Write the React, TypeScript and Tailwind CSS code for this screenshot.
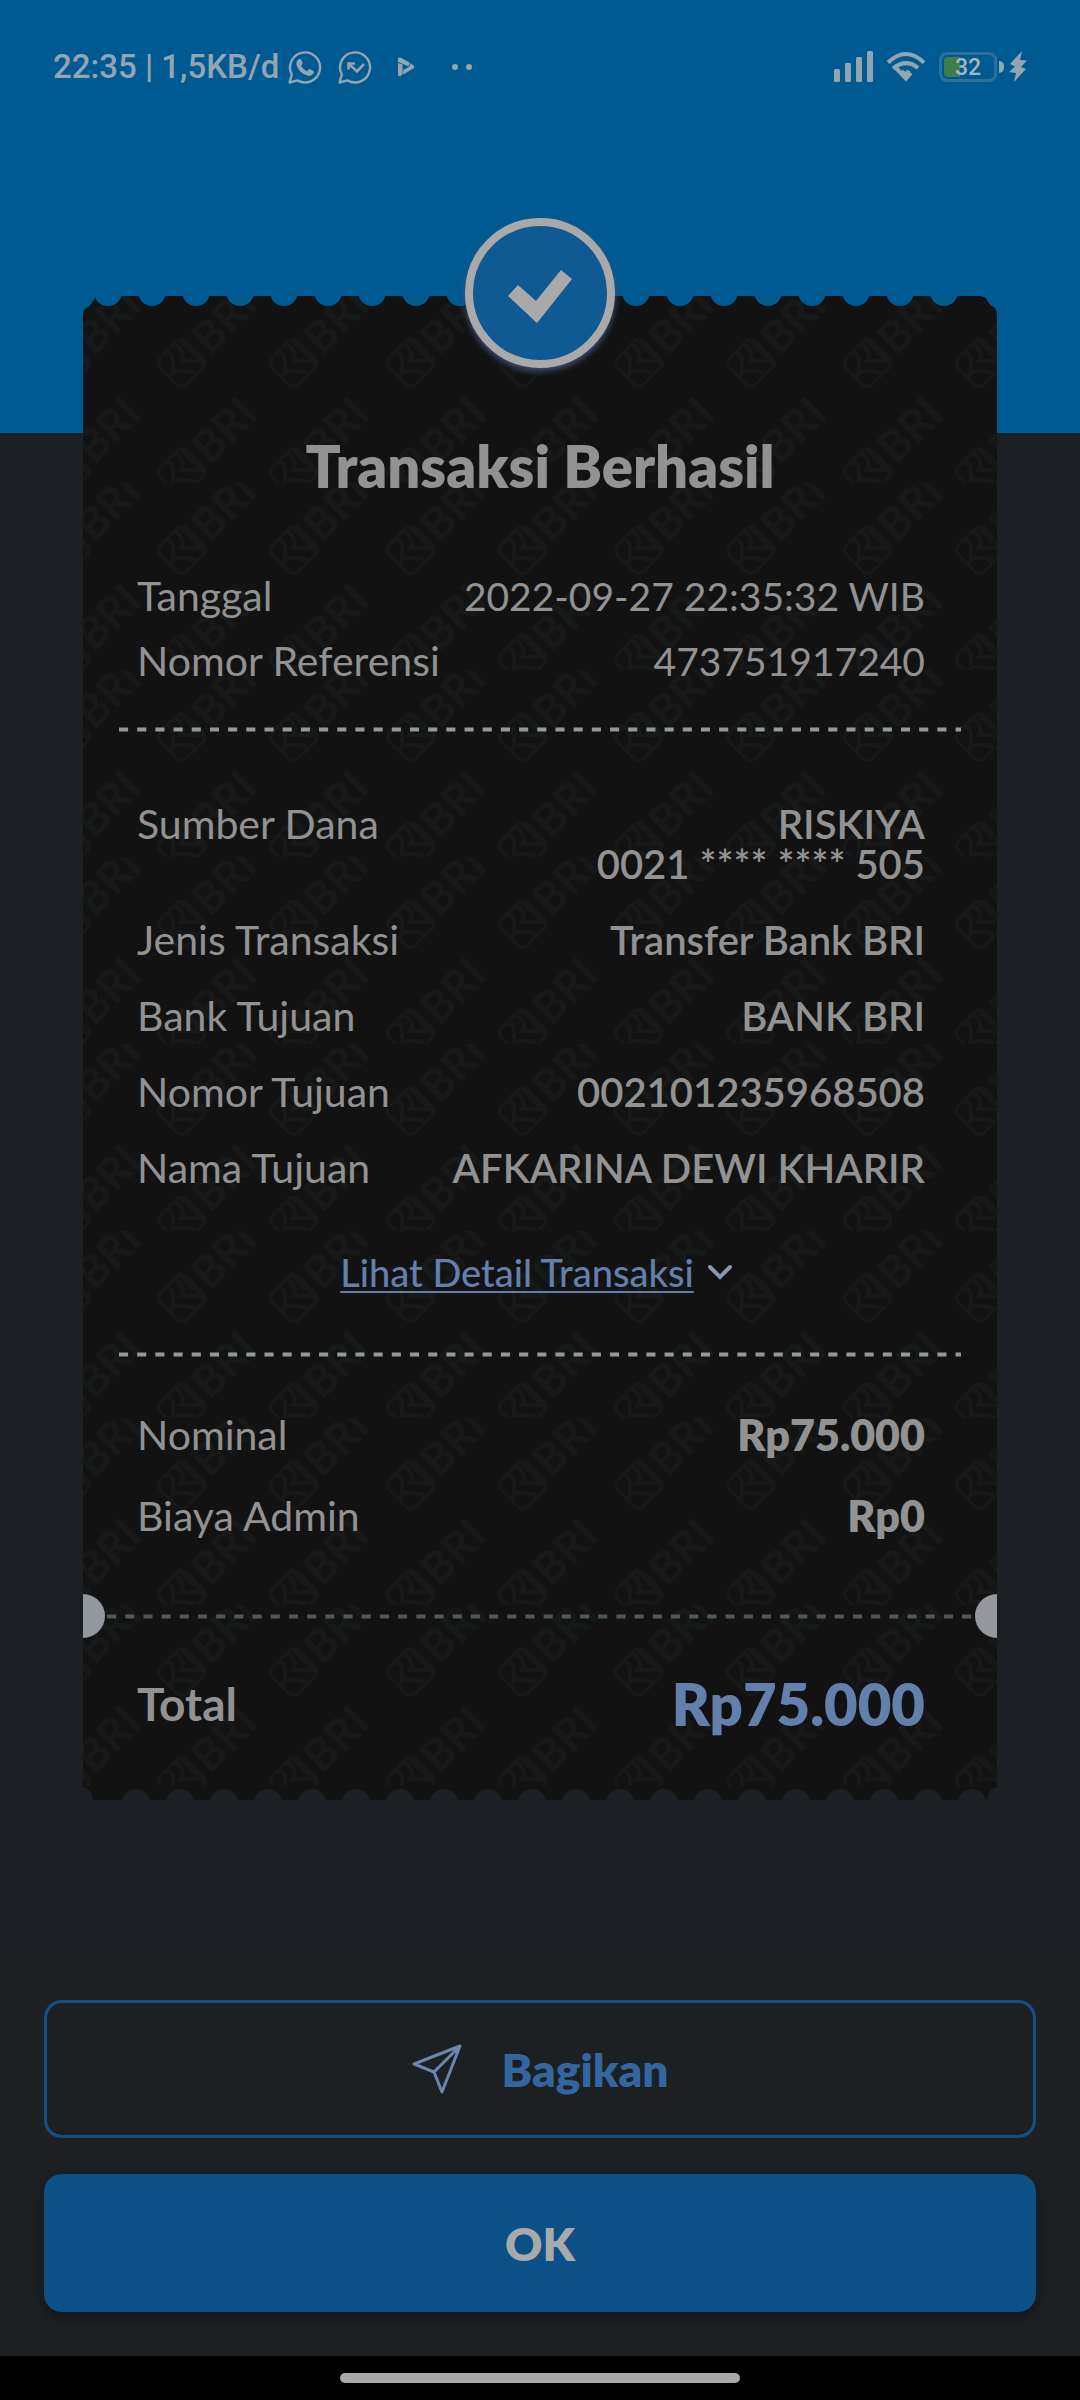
import React from "react";

const MARK = "#161918";

function BriMark({ x, y }: { x: number; y: number }) {
  return (
    <g transform={`translate(${x} ${y})`} fill="none" stroke={MARK} strokeWidth="4">
      <path d="M-18 -9 Q-9 -12 -8 -3 V6 Q-7 10 -12 14 M-10 -17 Q-2 -20 1 -10 Q3 -6 0 -2 H22 M-8 8 H6 L14 10" />
      <g transform="rotate(-45)">
        <rect x="-18" y="-18" width="37" height="37" rx="7" strokeWidth="3" />
        <path d="M16 -17 V18" />
        <text
          x="25"
          y="16"
          fill={MARK}
          stroke="none"
          fontFamily="Lato, sans-serif"
          fontWeight="700"
          fontSize="44"
        >
          BRI
        </text>
      </g>
    </g>
  );
}

function Watermark() {
  const xs = [-130, -18, 98, 210, 327, 439];
  return (
    <svg className="pointer-events-none absolute inset-x-0 top-0 h-[calc(100%-14px)] w-full" aria-hidden="true">
      <defs>
        <pattern id="bri" width="457" height="187" patternUnits="userSpaceOnUse">
          {xs.map((x) => (
            <g key={x}>
              <BriMark x={x} y={67} />
              <BriMark x={x} y={176} />
            </g>
          ))}
        </pattern>
      </defs>
      <rect width="100%" height="100%" fill="url(#bri)" />
    </svg>
  );
}

const holes = Array.from({ length: 20 }, (_, i) => i * 44);

function TopEdge() {
  return (
    <svg
      className="absolute inset-x-0 top-0 h-5 w-full fill-[#005a92]"
      viewBox="0 0 914 20"
      preserveAspectRatio="none"
      aria-hidden="true"
    >
      {holes.map((x) => (
        <circle key={x} cx={x + 25} cy="-4" r="14" />
      ))}
      <path d="M0 0 H13 Q9 9 3 12 Q0 14 0 20 Z" />
      <path d="M914 0 H897 Q903 1 904 4 Q907 10 911 11 Q914 14 914 20 Z" />
    </svg>
  );
}

function BottomEdge() {
  return (
    <svg
      className="absolute inset-x-0 bottom-0 h-5 w-full fill-[#1c1f24]"
      viewBox="0 0 914 20"
      preserveAspectRatio="none"
      aria-hidden="true"
    >
      {holes.map((x) => (
        <circle key={x} cx={x + 53} cy="23" r="14" />
      ))}
      <path d="M0 7 Q9 9 10 20 H0 Z" />
      <path d="M914 7 Q905 9 904 20 H914 Z" />
    </svg>
  );
}

function Dashes({ className, units }: { className: string; units: number }) {
  return (
    <svg className={className} aria-hidden="true">
      <line x1="0" x2="100%" y1="50%" y2="50%" strokeWidth="4" stroke="currentColor" pathLength={units} strokeDasharray="5 5" />
    </svg>
  );
}

function Row({ label, children, value }: { label: string; children: React.ReactNode; value: string }) {
  return (
    <div className="flex justify-between">
      <dt className="text-[41px] leading-10">{label}</dt>
      <dd className={"text-right " + value}>{children}</dd>
    </div>
  );
}

function Bubble({ children }: { children: React.ReactNode }) {
  return (
    <svg className="h-9 w-9" viewBox="0 0 36 36" fill="none" stroke="currentColor" strokeWidth="2.4" aria-hidden="true">
      <path d="M2.5 33.5 L4.8 25.5 A15 15 0 1 1 10.5 31.4 Z" strokeLinejoin="round" />
      {children}
    </svg>
  );
}

function StatusBar() {
  return (
    <div className="flex h-[134px] items-center justify-between pl-[53px] pr-[53px] text-[#93a5b3]">
      <div className="flex items-center">
        <span className="font-[Roboto,sans-serif] text-[33px] font-medium leading-10">22:35 | 1,5KB/d</span>
        <div className="ml-2 flex items-center gap-[14px]">
          <Bubble>
            <path
              d="M11.6 10.2 q1.5 -1.2 2.4 .4 l1.6 3 q.4 1 -.6 2 l-1 1.2 q2 3.8 6 5.4 l1.6 -1.8 q.8 -.8 1.6 -.2 l3.2 1.8 q1 .8 .2 2.2 q-2.2 3.4 -6 2.4 q-8.4 -2.4 -11 -10.4 q-.8 -4 2 -6 Z"
              fill="currentColor"
              stroke="none"
            />
          </Bubble>
          <Bubble>
            <path d="M18 14.5 H11.5 V20.5 M12 15 L20 22.5 L27 15" strokeWidth="2.6" />
          </Bubble>
        </div>
        <svg className="ml-6 h-5 w-[18px]" viewBox="0 0 18 20" fill="currentColor" aria-hidden="true">
          <path d="M1 6 L5.6 7.5 V17 L3.500 19 Q1 20 1 17.500 Z M1 4.8 V2 Q1.500 0 4 .8 L12.500 5.500 L11.500 9.400 Z M13.200 6 L17 9 Q18 10 17 11 L6.200 17.600 V13 L12.200 10 Z" />
        </svg>
        <svg className="ml-9 h-2 w-6" viewBox="0 0 24 8" fill="currentColor" aria-hidden="true">
          <circle cx="4" cy="4" r="3" />
          <circle cx="18" cy="4" r="3" />
        </svg>
      </div>
      <div className="flex items-center">
        <svg className="h-8 w-10" viewBox="0 0 40 32" fill="currentColor" aria-hidden="true">
          <rect x="0" y="18" width="6" height="13" rx="1.5" />
          <rect x="11" y="12" width="6" height="19" rx="1.5" />
          <rect x="22" y="6" width="6" height="25" rx="1.5" />
          <rect x="33" y="0" width="6" height="31" rx="1.5" />
        </svg>
        <svg className="ml-3 h-8 w-10" viewBox="0 0 40 32" fill="none" stroke="currentColor" strokeWidth="4" aria-hidden="true">
          <path d="M2 11.5 Q20 -5.5 38 11.5" />
          <path d="M7 17.500 Q20 7 32 17" />
          <path d="M9 16 L20 27.500 L25 22 M15.500 20.500 L20.500 24 L22.500 19.500" />
        </svg>
        <div className="ml-[13px] flex h-[30px] w-[58px] items-center rounded-[8px] border-3 border-[#2c6f9f] p-[2px]">
          <div className="relative flex h-full w-full items-center justify-center">
            <span className="absolute inset-y-0 left-0 w-4 rounded-l-[4px] bg-[#3f7d4a]" />
            <span className="relative font-[Roboto,sans-serif] text-[23px] font-medium leading-none text-[#a9b4bc]">32</span>
          </div>
        </div>
        <span className="ml-[2px] h-3 w-[5px] rounded-r-full bg-current" />
        <svg className="ml-[5px] h-8 w-[18px]" viewBox="0 0 18 32" fill="currentColor" aria-hidden="true">
          <path d="M13 0 L1 13 L6 15.500 L0 21 L7 22 L5 31 L17 18 L12 16 L18 9.500 L11 9 Z" />
        </svg>
      </div>
    </div>
  );
}

const plain = "text-[39px] leading-10";
const strong = "text-[40px] leading-10 font-semibold";
const amount = "text-[43px] leading-10 font-extrabold";

export default function App() {
  return (
    <div className="flex min-h-screen flex-col bg-[#1c1f24] font-[Lato,sans-serif] text-[#929292]">
      <header className="h-[433px] bg-[#005a92]">
        <StatusBar />
      </header>

      <main className="relative mx-[83px] -mt-[137px] bg-[#121212] pt-[140px] pb-[66px]">
        <Watermark />
        <TopEdge />
        <BottomEdge />
        <div className="absolute inset-x-0 -top-[78px] flex justify-center">
          <div className="h-[150px] w-[150px] rounded-full border-8 border-[#a9a9a9] bg-[#105a94] shadow-[0_3px_6px_#41537a]">
            <svg viewBox="0 0 134 134" aria-hidden="true">
              <path d="M35 70 L45 59 L63 75 L88 44 L99 53 L64 97 Z" fill="#a9a9a9" />
            </svg>
          </div>
        </div>

        <div className="relative">
          <h1 className="text-center text-[58px] font-extrabold leading-[60px]">Transaksi Berhasil</h1>

          <dl className="mt-20 flex flex-col gap-[25px] pr-[72px] pl-[54px]">
            <Row label="Tanggal" value={plain}>2022-09-27 22:35:32 WIB</Row>
            <Row label="Nomor Referensi" value={plain}>473751917240</Row>
          </dl>

          <div className="mt-[46px] px-9 text-[#929999]">
            <Dashes className="block h-[5px] w-full" units={463} />
          </div>

          <dl className="mt-[72px] flex flex-col gap-9 pr-[72px] pl-[54px]">
            <Row label="Sumber Dana" value={strong}>
              RISKIYA
              <br />
              0021 **** **** 505
            </Row>
            <Row label="Jenis Transaksi" value={strong}>Transfer Bank BRI</Row>
            <Row label="Bank Tujuan" value={strong}>BANK BRI</Row>
            <Row label="Nomor Tujuan" value={strong}>002101235968508</Row>
            <Row label="Nama Tujuan" value={strong}>AFKARINA DEWI KHARIR</Row>
          </dl>

          <div className="mt-16 flex items-center justify-center gap-[14px] pr-2 leading-10">
            <a href="#detail" className="text-[38px] leading-10 font-medium text-[#637fab] underline decoration-2 underline-offset-4">
              Lihat Detail Transaksi
            </a>
            <svg className="h-4 w-6" viewBox="0 0 24 16" fill="none" stroke="#8797ad" strokeWidth="4" aria-hidden="true">
              <path d="M2 3 L12 13 L22 3" strokeLinecap="round" />
            </svg>
          </div>

          <div className="mt-[60px] px-9 text-[#929999]">
            <Dashes className="block h-[5px] w-full" units={463} />
          </div>

          <dl className="mt-[58px] flex flex-col gap-[41px] pr-[72px] pl-[54px]">
            <Row label="Nominal" value={amount}>Rp75.000</Row>
            <Row label="Biaya Admin" value={amount}>Rp0</Row>
          </dl>

          <div className="mt-[58px] flex h-11 items-center gap-[2px]">
            <span className="h-11 w-[22px] rounded-r-full bg-[#93989c]" />
            <Dashes className="h-[5px] flex-1 text-[#4c5a5a]" units={476} />
            <span className="h-11 w-[22px] rounded-l-full bg-[#93989c]" />
          </div>

          <div className="mt-9 flex items-center justify-between pr-[72px] pl-[54px] leading-[60px]">
            <span className="text-[46px] font-bold">Total</span>
            <span className="text-[58px] font-extrabold text-[#637fab]">Rp75.000</span>
          </div>
        </div>
      </main>

      <footer className="mt-auto flex flex-col gap-9 bg-[#1c2022] px-11 pt-10 pb-11">
        <button
          type="button"
          className="flex h-[138px] items-center justify-center gap-10 rounded-[18px] border-3 border-[#12508a] text-[46px] font-extrabold text-[#33659f]"
        >
          <svg className="h-[50px] w-[50px]" viewBox="0 0 50 50" fill="none" stroke="#6b84b0" strokeWidth="3" strokeLinejoin="round" aria-hidden="true">
            <path d="M48 2 L2 20 L22 28 L30 48 Z M48 2 L22 28" />
          </svg>
          Bagikan
        </button>
        <button type="button" className="h-[138px] rounded-[18px] bg-[#0b5087] text-[46px] font-extrabold text-[#a9a9a9] shadow-[0_6px_10px_#14171a]">
          OK
        </button>
      </footer>

      <div className="flex h-11 items-center justify-center bg-black">
        <div className="h-[10px] w-[37%] rounded-full bg-[#a9a9a9]" />
      </div>
    </div>
  );
}
